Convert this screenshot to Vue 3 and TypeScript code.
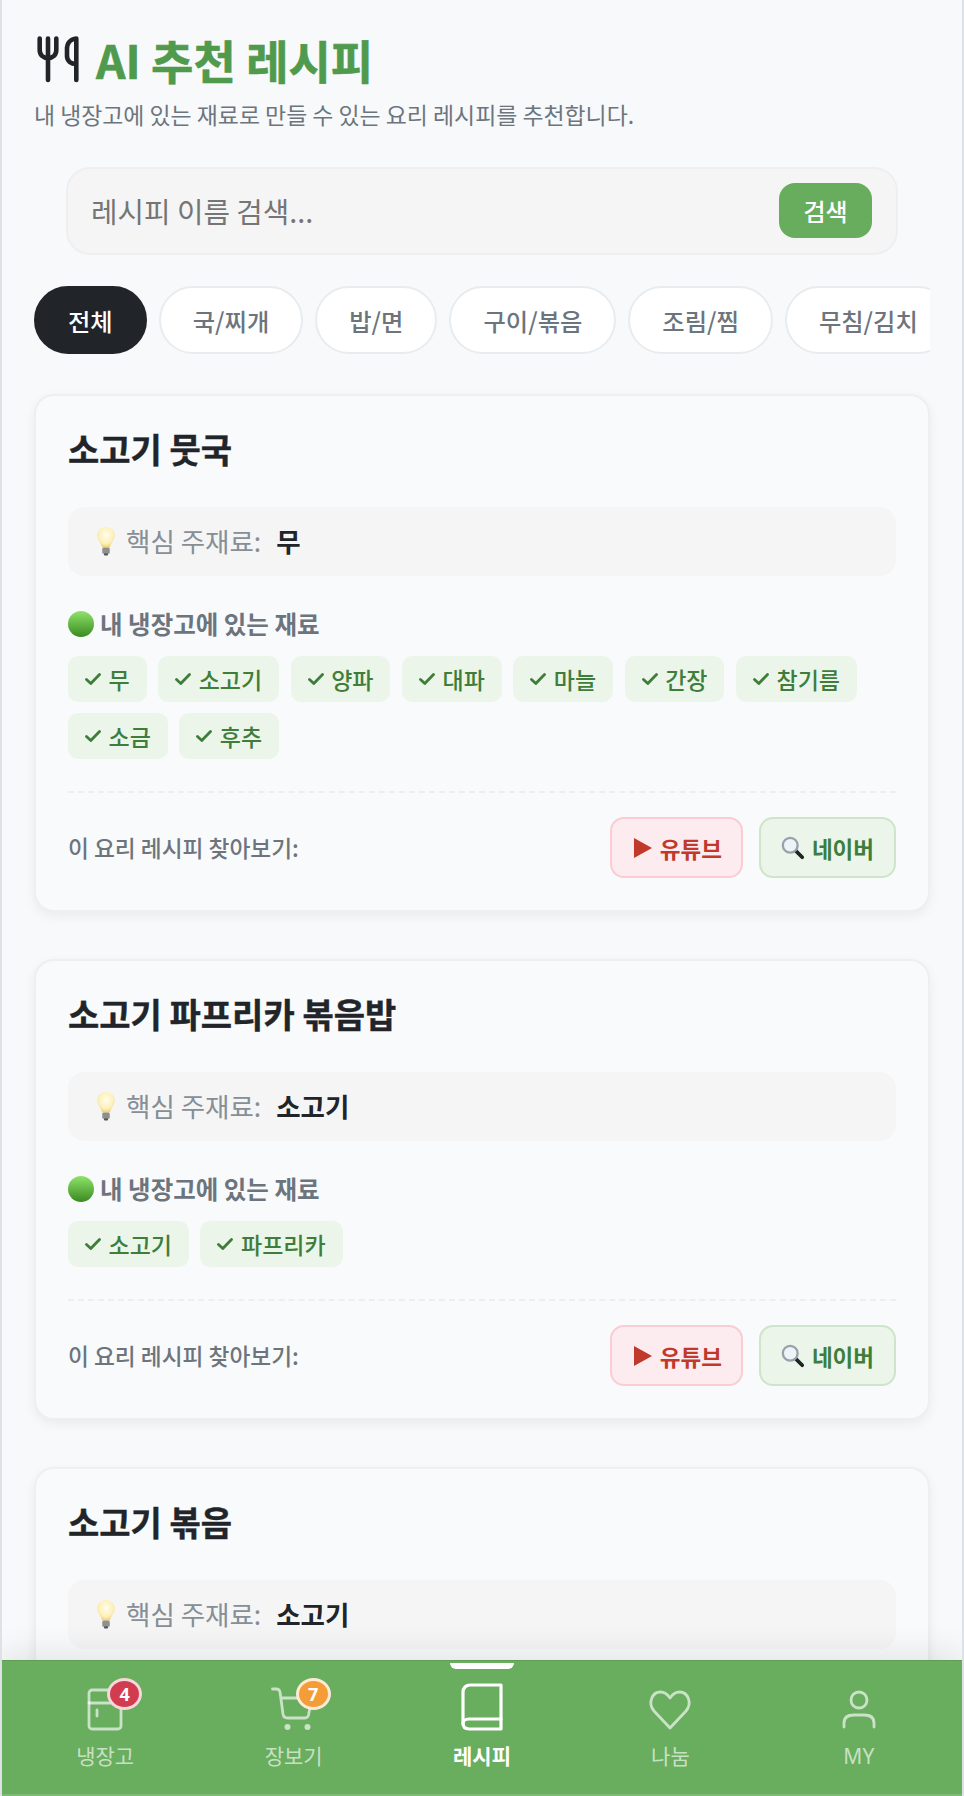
<script setup lang="ts">
import { ref } from 'vue'

interface Recipe {
  title: string
  main: string
  have: string[]
}

const categories = ['전체', '국/찌개', '밥/면', '구이/볶음', '조림/찜', '무침/김치']
const activeCategory = ref('전체')

const recipes: Recipe[] = [
  {
    title: '소고기 뭇국',
    main: '무',
    have: ['무', '소고기', '양파', '대파', '마늘', '간장', '참기름', '소금', '후추'],
  },
  {
    title: '소고기 파프리카 볶음밥',
    main: '소고기',
    have: ['소고기', '파프리카'],
  },
  {
    title: '소고기 볶음',
    main: '소고기',
    have: ['소고기', '양파', '대파'],
  },
]

const navItems = [
  { key: 'fridge', label: '냉장고', badge: '4', badgeClass: 'red' },
  { key: 'cart', label: '장보기', badge: '7', badgeClass: 'orange' },
  { key: 'book', label: '레시피', badge: '', badgeClass: '' },
  { key: 'heart', label: '나눔', badge: '', badgeClass: '' },
  { key: 'user', label: 'MY', badge: '', badgeClass: '' },
]
</script>

<template>
  <div class="shell">
    <main class="content">
      <header class="page-head">
        <h1 class="page-title">
          <svg class="title-icon" viewBox="0 0 44 48" fill="none" stroke="#212529" stroke-width="4.600" stroke-linecap="round" stroke-linejoin="round">
            <path d="M2.700 3.500V15C2.700 20 6 23 11 23S19.300 20 19.300 15V3.500" />
            <path d="M11 3.500V45" />
            <path d="M39.300 45V3.500C33.500 4 30 8 30 14V21C30 26 34 29 39.300 29" />
          </svg>
          <span>AI 추천 레시피</span>
        </h1>
        <p class="page-sub">내 냉장고에 있는 재료로 만들 수 있는 요리 레시피를 추천합니다.</p>
      </header>

      <form class="search" @submit.prevent>
        <input class="search-input" type="text" placeholder="레시피 이름 검색..." />
        <button class="search-btn" type="submit">검색</button>
      </form>

      <div class="tabs">
        <button
          v-for="cat in categories"
          :key="cat"
          class="tab"
          :class="{ active: cat === activeCategory }"
          @click="activeCategory = cat"
        >
          {{ cat }}
        </button>
      </div>

      <article v-for="recipe in recipes" :key="recipe.title" class="card">
        <h2 class="card-title">{{ recipe.title }}</h2>

        <div class="key-box">
          <svg class="bulb" viewBox="0 0 18 28">
            <defs>
              <radialGradient id="bulbGlow" cx="50%" cy="40%" r="60%">
                <stop offset="0%" stop-color="#fffdf0" />
                <stop offset="70%" stop-color="#fdf0b8" />
                <stop offset="100%" stop-color="#f0d070" />
              </radialGradient>
            </defs>
            <path d="M9 1C4.200 1 1 4.600 1 9c0 4 3.400 6.500 4.400 11h7.200C13.600 15.500 17 13 17 9c0-4.400-3.200-8-8-8z" fill="url(#bulbGlow)" />
            <rect x="5.500" y="20" width="7" height="6" rx="1.500" fill="#8f8f8f" />
            <rect x="7" y="25.500" width="4" height="2" rx="1" fill="#555" />
          </svg>
          <span class="key-label">핵심 주재료:</span>
          <strong class="key-value">{{ recipe.main }}</strong>
        </div>

        <h3 class="have-title">
          <svg class="dot" viewBox="0 0 26 26">
            <defs>
              <linearGradient id="greenDot" x1="0" y1="0" x2="0" y2="1">
                <stop offset="0%" stop-color="#8fe36a" />
                <stop offset="100%" stop-color="#3a8a20" />
              </linearGradient>
            </defs>
            <circle cx="13" cy="13" r="13" fill="url(#greenDot)" />
          </svg>
          <span>내 냉장고에 있는 재료</span>
        </h3>

        <ul class="chips">
          <li v-for="item in recipe.have" :key="item" class="chip">
            <svg class="check" viewBox="0 0 16 14" fill="none" stroke="#3e7d3a" stroke-width="2.800" stroke-linecap="round" stroke-linejoin="round">
              <path d="M1.500 7.500L5.800 11.500L14.500 2.500" />
            </svg>
            <span>{{ item }}</span>
          </li>
        </ul>

        <footer class="card-foot">
          <span class="foot-label">이 요리 레시피 찾아보기:</span>
          <div class="foot-links">
            <a class="link youtube">
              <svg class="play" viewBox="0 0 18 20"><path d="M0 0L18 10L0 20z" fill="#c0392b" /></svg>
              <span>유튜브</span>
            </a>
            <a class="link naver">
              <svg class="lens" viewBox="0 0 26 26">
                <path d="M15 15L23 23" stroke="#222" stroke-width="4" stroke-linecap="round" />
                <circle cx="10" cy="10" r="8" fill="#eef3f8" stroke="#9aa0ab" stroke-width="2.500" />
              </svg>
              <span>네이버</span>
            </a>
          </div>
        </footer>
      </article>
    </main>

    <nav class="bottom-nav">
      <a v-for="item in navItems" :key="item.key" class="nav-item" :class="{ active: item.key === 'book' }">
        <span v-if="item.key === 'book'" class="nav-marker"></span>
        <span class="nav-icon">
          <svg v-if="item.key === 'fridge'" viewBox="0 0 48 48" fill="none" stroke="currentColor" stroke-width="2.800" stroke-linecap="round" stroke-linejoin="round">
            <rect x="8" y="7" width="32" height="39" rx="3" />
            <path d="M8 20H40M16 27V33" />
          </svg>
          <svg v-else-if="item.key === 'cart'" viewBox="0 0 48 48" fill="none" stroke="currentColor" stroke-width="2.800" stroke-linecap="round" stroke-linejoin="round">
            <path d="M2.500 6H6.500C8.500 6 9.500 7 10 9L13 31C13.500 34 14.500 35 17.500 35H35C37 35 38 34 38.500 32L42 15H11" />
            <circle cx="17.500" cy="44" r="3" fill="currentColor" stroke="none" />
            <circle cx="37.500" cy="44" r="3" fill="currentColor" stroke="none" />
          </svg>
          <svg v-else-if="item.key === 'book'" viewBox="0 0 48 48" fill="none" stroke="currentColor" stroke-width="3.200" stroke-linecap="round" stroke-linejoin="round">
            <path d="M43 2H12C8 2 5 5 5 9V40C5 44 7 46 11 46H43V2z" />
            <path d="M5 41C5 37 7 36 11 36H43" />
          </svg>
          <svg v-else-if="item.key === 'heart'" viewBox="0 0 48 48" fill="none" stroke="currentColor" stroke-width="2.800" stroke-linecap="round" stroke-linejoin="round">
            <path d="M24 45L8 28C1.500 20 6 9 14.500 9C18.500 9 22 12 24 15C26 12 29.500 9 33.500 9C42 9 46.500 20 40 28z" />
          </svg>
          <svg v-else viewBox="0 0 48 48" fill="none" stroke="currentColor" stroke-width="2.800" stroke-linecap="round" stroke-linejoin="round">
            <circle cx="24" cy="17" r="8" />
            <path d="M9 44V40C9 34 13 32 19 32H29C35 32 39 34 39 40V44" />
          </svg>
        </span>
        <span v-if="item.badge" class="badge" :class="item.badgeClass">{{ item.badge }}</span>
        <span class="nav-label">{{ item.label }}</span>
      </a>
    </nav>
  </div>
</template>

<style>
html,
body {
  margin: 0;
  overflow: hidden;
}
</style>

<style scoped>
.shell {
  position: relative;
  height: 100vh;
  overflow: hidden;
  box-sizing: border-box;
  border-left: 2px solid #dee2e6;
  border-right: 2px solid #dee2e6;
  background: #f8f9fa;
  font-family: "Noto Sans CJK KR", "Noto Sans", sans-serif;
  color: #212529;
}

.content {
  padding: 32px 32px 0;
}

.page-title {
  display: flex;
  align-items: center;
  gap: 15px;
  margin: 0 0 0 3px;
  font-size: 46px;
  line-height: 54px;
  font-weight: 700;
  color: #4f9a4c;
  -webkit-text-stroke: 0.6px #4f9a4c;
}

.title-icon {
  width: 44px;
  height: 48px;
  flex: none;
}

.page-sub {
  margin: 14px 0 0;
  font-size: 22.900px;
  line-height: 28px;
  color: #6c757d;
}

.search {
  display: flex;
  align-items: center;
  box-sizing: border-box;
  height: 88px;
  margin: 39px 32px 0;
  padding: 0 24px 2px 21px;
  background: #f5f5f5;
  border: 2px solid #eeeff1;
  border-radius: 24px;
}

.search-input {
  flex: 1;
  min-width: 0;
  border: none;
  outline: none;
  background: transparent;
  font: inherit;
  font-size: 28.800px;
  color: #212529;
}

.search-input::placeholder {
  color: #757575;
}

.search-btn {
  width: 93px;
  height: 55px;
  border: none;
  border-radius: 16px;
  background: #68ad5e;
  color: #fff;
  font: inherit;
  font-size: 24px;
  font-weight: 500;
}

.tabs {
  display: flex;
  gap: 12px;
  margin-top: 31px;
  overflow: hidden;
}

.tab {
  flex: none;
  height: 68px;
  padding: 0 32px;
  border: 2px solid #e9ecef;
  border-radius: 34px;
  background: #fff;
  color: #6c757d;
  font: inherit;
  font-size: 24.300px;
  font-weight: 500;
}

.tab.active {
  background: #212529;
  border-color: #212529;
  color: #fff;
}

.card {
  box-sizing: border-box;
  margin-top: 40px;
  padding: 32px;
  background: #f9fafc;
  border: 2px solid #eeeff1;
  border-radius: 20px;
  box-shadow: 0 4px 12px rgba(0, 0, 0, 0.06);
}

.card + .card {
  margin-top: 47px;
}

.card-title {
  margin: 0;
  font-size: 34px;
  line-height: 42px;
  font-weight: 700;
  -webkit-text-stroke: 0.4px #212529;
}

.key-box {
  display: flex;
  align-items: center;
  box-sizing: border-box;
  height: 69px;
  margin-top: 37px;
  padding: 0 28px 2px;
  background: #f5f5f5;
  border-radius: 16px;
}

.bulb {
  width: 20px;
  height: 30px;
  flex: none;
}

.key-label {
  margin-left: 10px;
  font-size: 26.500px;
  color: #868e96;
}

.key-value {
  margin-left: 15px;
  font-size: 26.500px;
  font-weight: 700;
}

.have-title {
  display: flex;
  align-items: center;
  gap: 6px;
  margin: 32px 0 0;
  font-size: 24.500px;
  line-height: 32px;
  font-weight: 700;
  color: #6c757d;
}

.dot {
  width: 26px;
  height: 26px;
  flex: none;
}

.chips {
  display: flex;
  flex-wrap: wrap;
  gap: 11px 11.500px;
  margin: 16px 0 0;
  padding: 0;
  list-style: none;
}

.chip {
  display: flex;
  align-items: center;
  gap: 7.500px;
  height: 46px;
  padding: 0 17px;
  background: #ebf5ea;
  border-radius: 10px;
  font-size: 23px;
  font-weight: 500;
  color: #3e7d3a;
}

.check {
  width: 16px;
  height: 14px;
  flex: none;
}

.card-foot {
  display: flex;
  align-items: center;
  justify-content: space-between;
  margin-top: 32px;
  padding-top: 24px;
  border-top: 2px dashed #eceef0;
}

.foot-label {
  font-size: 22.700px;
  font-weight: 500;
  color: #6c757d;
}

.foot-links {
  display: flex;
  gap: 16px;
}

.link {
  display: flex;
  align-items: center;
  gap: 7px;
  box-sizing: border-box;
  height: 61px;
  border-radius: 14px;
  border: 2px solid;
  font-size: 22.500px;
  font-weight: 700;
}

.youtube {
  gap: 8px;
  padding: 0 19px 0 22px;
  background: #fdecef;
  border-color: #f9cdd2;
  color: #c0392b;
}

.naver {
  padding: 0 20px;
  background: #ebf5ea;
  border-color: #cfe5cb;
  color: #3e7d3a;
}

.play {
  width: 18px;
  height: 20px;
}

.lens {
  width: 24px;
  height: 24px;
}

.bottom-nav {
  position: absolute;
  left: 0;
  right: 0;
  bottom: 0;
  box-sizing: border-box;
  height: 136px;
  display: flex;
  padding: 0 9px;
  background: #69ad5e;
  border-top: 1px solid #5e9f55;
  border-bottom: 2px solid #7cbb72;
  box-shadow: 0 -10px 28px rgba(0, 0, 0, 0.08);
}

.nav-item {
  position: relative;
  flex: 1;
  display: flex;
  flex-direction: column;
  align-items: center;
  padding-top: 22px;
  color: rgba(255, 255, 255, 0.65);
}

.nav-item.active {
  color: #fff;
}

.nav-marker {
  position: absolute;
  top: 2px;
  left: 50%;
  width: 64px;
  height: 6px;
  margin-left: -32px;
  background: #fff;
  border-radius: 0 0 6px 6px;
}

.nav-icon {
  width: 48px;
  height: 48px;
}

.nav-icon svg {
  display: block;
  width: 100%;
  height: 100%;
}

.badge {
  position: absolute;
  top: 17px;
  left: 50%;
  margin-left: 2px;
  box-sizing: border-box;
  width: 35px;
  height: 32px;
  display: flex;
  align-items: center;
  justify-content: center;
  border-radius: 50%;
  border: 3px solid rgba(255, 255, 255, 0.8);
  font-family: "Noto Sans", sans-serif;
  font-size: 18px;
  font-weight: 700;
  color: #fff;
}

.badge.red {
  background: #d13d4f;
}

.badge.orange {
  background: #f49d37;
}

.nav-label {
  margin-top: 11px;
  font-family: "Noto Sans", "Noto Sans CJK KR", sans-serif;
  font-size: 21px;
  line-height: 28px;
}

.nav-item.active .nav-label {
  font-weight: 700;
}
</style>
